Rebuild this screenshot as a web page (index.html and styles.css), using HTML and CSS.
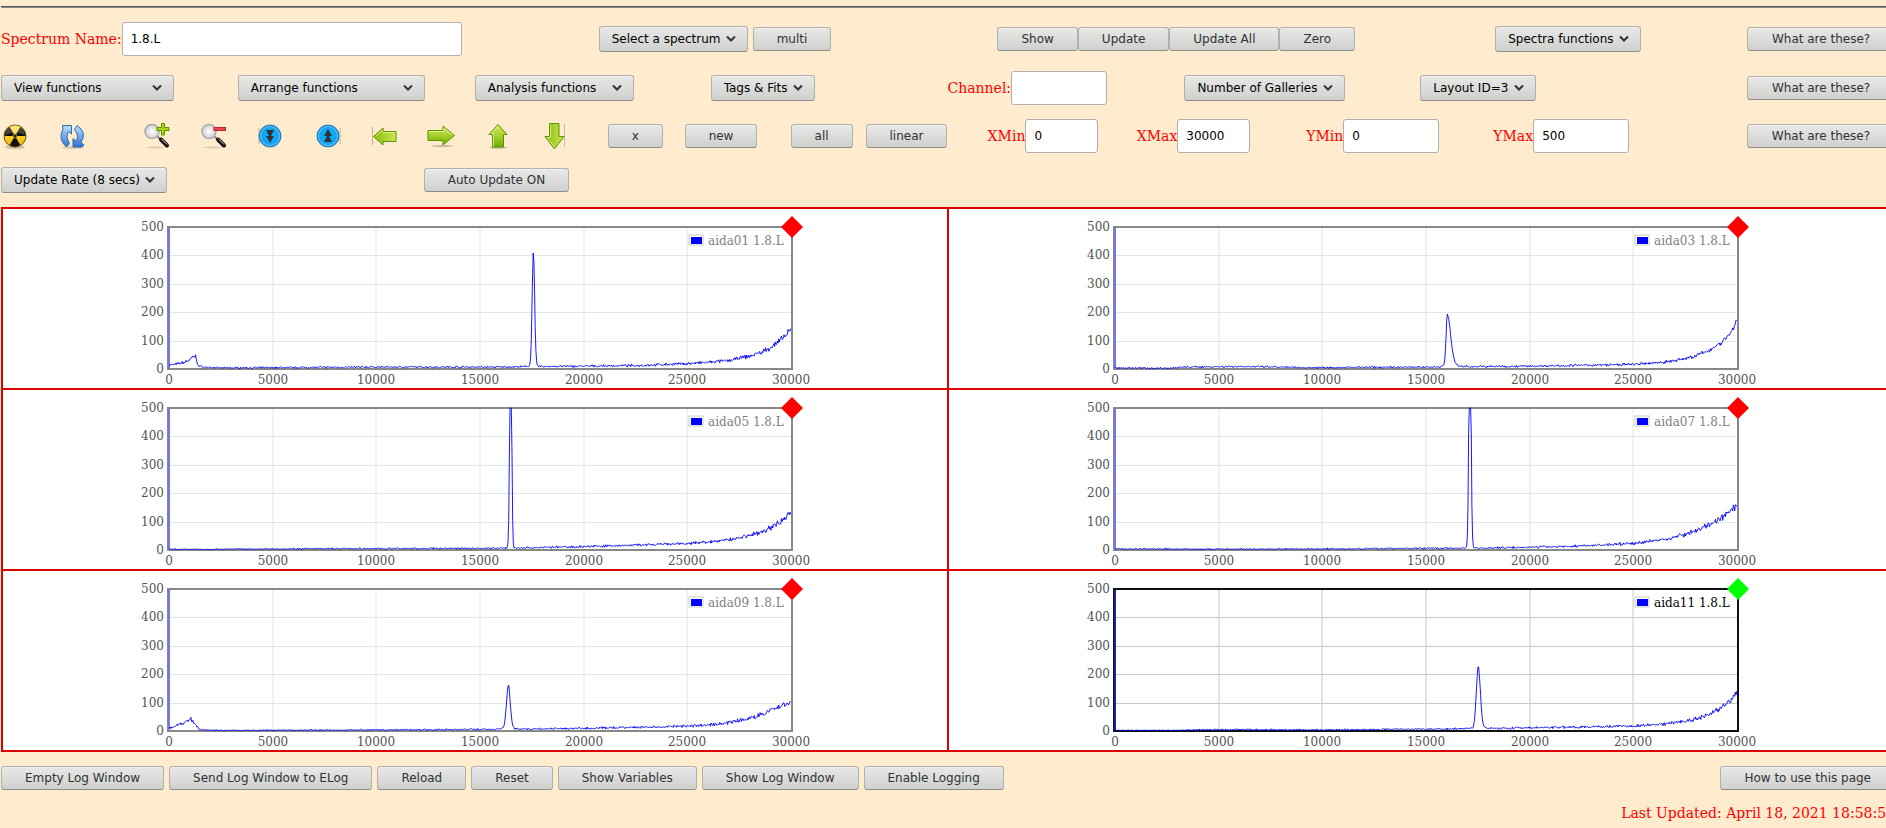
FILE: index.html
```
<!DOCTYPE html>
<html lang="en">
<head>
  <meta charset="UTF-8" />
  <meta name="viewport" content="width=device-width, initial-scale=1.0"/>
  <title>Spectrum Browser</title>
  <link rel="stylesheet" href="styles.css">
</head>
<body>

<div class="page">
  <hr>

  <form class="controls" id="controls">
    <div class="row row-name">
      <div class="field">
        <label for="spectrum">Spectrum Name:</label>
        <input type="text" id="spectrum" class="wide" value="1.8.L" />
      </div>
      <div class="field spaced">
        <select aria-label="Select a spectrum"><option>Select a spectrum</option></select>
        <button type="button">multi</button>
      </div>
      <div class="field">
        <button type="button">Show</button>
        <button type="button">Update</button>
        <button type="button">Update All</button>
        <button type="button">Zero</button>
      </div>
      <div class="field">
        <select aria-label="Spectra functions"><option>Spectra functions</option></select>
      </div>
      <div class="field"><button type="button" class="fill">What are these?</button></div>
    </div>

    <div class="row row-functions">
      <div class="field"><select class="view" aria-label="View functions"><option>View functions</option></select></div>
      <div class="field"><select class="arrange" aria-label="Arrange functions"><option>Arrange functions</option></select></div>
      <div class="field"><select class="analysis" aria-label="Analysis functions"><option>Analysis functions</option></select></div>
      <div class="field"><select aria-label="Tags and fits"><option>Tags &amp; Fits</option></select></div>
      <div class="field">
        <label for="channel">Channel:</label>
        <input type="text" id="channel" class="medium" />
      </div>
      <div class="field"><select aria-label="Number of Galleries"><option>Number of Galleries</option></select></div>
      <div class="field"><select aria-label="Layout"><option>Layout ID=3</option></select></div>
      <div class="field"><button type="button" class="fill">What are these?</button></div>
    </div>

    <div class="row row-tools">
      <button type="button" class="icon" aria-label="Clear">
        <svg viewBox="0 0 28 28">
          <ellipse cx="14" cy="25" rx="10" ry="2" fill="#000" opacity=".18"/>
          <circle cx="14" cy="14" r="11" fill="url(#yellow)" stroke="#6b5200"/>
          <path d="M14 14L3.500 14A10.500 10.500 0 0 1 8.700 4.900ZM14 14L19.300 4.900A10.500 10.500 0 0 1 24.500 14ZM14 14L19.300 23.100A10.500 10.500 0 0 1 8.700 23.100Z" fill="#111"/>
          <path d="M4 13a10 10 0 0 1 20 0q-10-5-20 0z" fill="#fff" opacity=".2"/>
          <circle cx="14" cy="14" r="2" fill="#222" stroke="#e8b800" stroke-width=".6"/>
        </svg>
      </button>
      <button type="button" class="icon" aria-label="Refresh">
        <svg viewBox="0 0 28 28">
          <ellipse cx="15" cy="25.500" rx="11" ry="1.500" fill="#000" opacity=".15"/>
          <path d="M4.500 3.500H13.500V12L10.800 9.500Q7 14 11.500 21.500L8.500 25Q-.5 17 5 7.500Z" fill="url(#blue)" stroke="#2a69b8" stroke-linejoin="round"/>
          <path d="M23.500 25H15V16.500L18 19.200Q21.500 13.500 16.500 7.500L19 3.500Q29.500 10.500 23 20.500L26 23Z" fill="url(#blue)" stroke="#2a69b8" stroke-linejoin="round"/>
        </svg>
      </button>
      <button type="button" class="icon" aria-label="Zoom in">
        <svg viewBox="0 0 28 28">
          <ellipse cx="14" cy="25.500" rx="9" ry="1.200" fill="#000" opacity=".12"/>
          <path d="M14.500 13.500L19 18" stroke="#888" stroke-width="2"/>
          <path d="M19 17.500L25 23.500" stroke="#111" stroke-width="4" stroke-linecap="round"/>
          <path d="M19.500 17L25 22.500" stroke="#ccc"/>
          <circle cx="10" cy="9.500" r="7" fill="url(#glass)" stroke="#aaa" stroke-width="1.500"/>
          <circle cx="10" cy="9.500" r="5.500" fill="none" stroke="#ddd"/>
          <path d="M19.500 1.500h3v4h4.500v3h-4.500v4.500h-3v-4.500h-4.500v-3h4.500z" fill="#a6d80e" stroke="#5c8c00"/>
        </svg>
      </button>
      <button type="button" class="icon" aria-label="Zoom out">
        <svg viewBox="0 0 28 28">
          <ellipse cx="14" cy="25.500" rx="9" ry="1.200" fill="#000" opacity=".12"/>
          <path d="M14.500 13.500L19 18" stroke="#888" stroke-width="2"/>
          <path d="M19 17.500L25 23.500" stroke="#111" stroke-width="4" stroke-linecap="round"/>
          <path d="M19.500 17L25 22.500" stroke="#ccc"/>
          <circle cx="10" cy="9.500" r="7" fill="url(#glass)" stroke="#aaa" stroke-width="1.500"/>
          <circle cx="10" cy="9.500" r="5.500" fill="none" stroke="#ddd"/>
          <rect x="15" y="5.500" width="11.500" height="3" fill="#e8484a" stroke="#c02528"/>
        </svg>
      </button>
      <button type="button" class="icon" aria-label="Scale down">
        <svg viewBox="0 0 28 28">
          <path d="M3 6V22" stroke="#a08870" opacity=".6"/>
          <circle cx="14" cy="14" r="11" fill="url(#disc)" stroke="#2377b5"/>
          <circle cx="14" cy="14" r="9.500" fill="none" stroke="#6bd2ff" opacity=".8"/>
          <path d="M10 8h8l-3 6h3l-4 7-4-7h3z" fill="#333" />
        </svg>
      </button>
      <button type="button" class="icon" aria-label="Scale up">
        <svg viewBox="0 0 28 28">
          <path d="M27 6V22" stroke="#a08870" opacity=".6"/>
          <circle cx="15" cy="14" r="11" fill="url(#disc)" stroke="#2377b5"/>
          <circle cx="15" cy="14" r="9.500" fill="none" stroke="#6bd2ff" opacity=".8"/>
          <path d="M11 20h8l-3-6h3l-4-7-4 7h3z" fill="#333"/>
        </svg>
      </button>
      <button type="button" class="icon" aria-label="Left">
        <svg viewBox="0 0 28 28">
          <path d="M2.500 5V23" stroke="#a08870" opacity=".6"/>
          <path d="M3.500 14.500L13 6V9.500H26V19.500H13V23Z" fill="url(#greenX)" stroke="#5c9400" stroke-linejoin="round"/>
          <path d="M5.500 14.500L12 8.500V10.500H25" fill="none" stroke="#e4f59a" opacity=".8"/>
        </svg>
      </button>
      <button type="button" class="icon" aria-label="Right">
        <svg viewBox="0 0 28 28">
          <ellipse cx="15" cy="24" rx="11" ry="1.200" fill="#000" opacity=".2"/>
          <path d="M27.500 13.500L16 4V8.500H1V18.500H16V23Z" fill="url(#greenY)" stroke="#5c9400" stroke-linejoin="round"/>
          <path d="M2 9.500H17V6.500L25.500 13" fill="none" stroke="#e4f59a" opacity=".8"/>
        </svg>
      </button>
      <button type="button" class="icon" aria-label="Up">
        <svg viewBox="0 0 28 28">
          <ellipse cx="14" cy="25.500" rx="9" ry="1.200" fill="#000" opacity=".25"/>
          <path d="M14 2.500L23 12.500H19.500V25H8.500V12.500H5Z" fill="url(#greenY)" stroke="#5c9400" stroke-linejoin="round"/>
          <path d="M14 4.500L7.500 11.500H9.500V24" fill="none" stroke="#e4f59a" opacity=".8"/>
        </svg>
      </button>
      <button type="button" class="icon" aria-label="Down">
        <svg viewBox="0 0 28 28">
          <path d="M23.500 2V25" stroke="#a08870" opacity=".5"/>
          <path d="M13.500 27L23 14.500H18V1.500H8.500V14.500H4Z" fill="url(#greenX)" stroke="#5c9400" stroke-linejoin="round"/>
          <path d="M13.500 25L6 15.500H9.500V2.500" fill="none" stroke="#e4f59a" opacity=".8"/>
        </svg>
      </button>
      <div class="field"><button type="button">x</button></div>
      <div class="field"><button type="button">new</button></div>
      <div class="field"><button type="button">all</button></div>
      <div class="field"><button type="button">linear</button></div>
      <div class="field end">
        <label for="xmin">XMin</label>
        <input type="text" id="xmin" class="small" value="0" />
      </div>
      <div class="field end">
        <label for="xmax">XMax</label>
        <input type="text" id="xmax" class="small" value="30000" />
      </div>
      <div class="field end">
        <label for="ymin">YMin</label>
        <input type="text" id="ymin" class="medium" value="0" />
      </div>
      <div class="field end">
        <label for="ymax">YMax</label>
        <input type="text" id="ymax" class="medium" value="500" />
      </div>
      <div class="field end"><button type="button" class="fill">What are these?</button></div>
    </div>

    <div class="row row-update">
      <div class="field"><select aria-label="Update Rate"><option>Update Rate (8 secs)</option></select></div>
      <div class="field"><button type="button">Auto Update ON</button></div>
    </div>
  </form>

  <div class="gallery" id="gallery"></div>

  <div class="bottom">
    <button type="button">Empty Log Window</button>
    <button type="button">Send Log Window to ELog</button>
    <button type="button">Reload</button>
    <button type="button">Reset</button>
    <button type="button">Show Variables</button>
    <button type="button">Show Log Window</button>
    <button type="button">Enable Logging</button>
    <button type="button" class="help">How to use this page</button>
  </div>
  <div class="updated">Last Updated: April 18, 2021 18:58:51</div>
</div>

<!-- shared icon gradients -->
<svg class="defs" aria-hidden="true">
  <defs>
    <linearGradient id="yellow" x2="0" y2="1"><stop stop-color="#ffe45c"/><stop offset="1" stop-color="#f2b600"/></linearGradient>
    <linearGradient id="blue" x2="0" y2="1"><stop stop-color="#b8e2ff"/><stop offset="1" stop-color="#3273cc"/></linearGradient>
    <radialGradient id="glass"><stop stop-color="#fff"/><stop offset="1" stop-color="#cfcfd6"/></radialGradient>
    <radialGradient id="disc"><stop stop-color="#00b4ff"/><stop offset="1" stop-color="#1e9cec"/></radialGradient>
    <linearGradient id="greenY" x2="0" y2="1"><stop stop-color="#d8ec5c"/><stop offset="1" stop-color="#6fb000"/></linearGradient>
    <linearGradient id="greenX"><stop stop-color="#84bd06"/><stop offset="1" stop-color="#cfe65a"/></linearGradient>
  </defs>
</svg>

<script>
  // base: [channel, counts] points, peak: position, height, left and right width
  const charts = [
    { name: "aida01 1.8.L", peak: [17575, 390, 60, 60],
      base: [[0, 14], [200, 15], [700, 23], [1000, 32], [1150, 43], [1280, 44], [1420, 10], [1800, 6], [2500, 4], [5000, 5], [10000, 7], [16000, 7], [20000, 10], [22500, 12], [25000, 19], [26000, 23], [27000, 30], [28000, 45], [28500, 57], [29000, 74], [29500, 102], [30000, 136]] },
    { name: "aida03 1.8.L", peak: [16030, 172, 60, 160],
      base: [[0, 4], [2500, 3], [3500, 7], [6000, 9], [9000, 5], [15000, 7], [20000, 10], [25000, 16], [26000, 21], [27000, 29], [27500, 37], [28200, 50], [28800, 72], [29300, 97], [29700, 127], [30000, 172]] },
    { name: "aida05 1.8.L", peak: [16480, 900, 45, 45],
      base: [[0, 3], [1500, 2], [5000, 4], [16000, 6], [20000, 12], [25000, 22], [26500, 31], [27500, 43], [28500, 62], [29200, 85], [29600, 108], [30000, 130]] },
    { name: "aida07 1.8.L", peak: [17120, 900, 50, 50],
      base: [[0, 4], [5000, 3], [10000, 4], [18000, 7], [22000, 13], [25000, 23], [26500, 37], [27500, 55], [28500, 83], [29200, 109], [29600, 131], [30000, 156]] },
    { name: "aida09 1.8.L", peak: [16370, 142, 90, 90],
      base: [[0, 11], [200, 12], [600, 26], [1050, 42], [1300, 20], [1500, 4], [2500, 2], [10000, 4], [16000, 6], [20000, 9], [25000, 17], [26500, 24], [27500, 36], [28500, 55], [29200, 78], [29600, 91], [30000, 105]] },
    { name: "aida11 1.8.L", peak: [17520, 206, 90, 100], active: true,
      base: [[0, 2], [3000, 2], [4500, 5], [10000, 4], [17000, 8], [20000, 11], [25000, 18], [26500, 25], [27500, 35], [28200, 46], [28800, 64], [29300, 86], [29700, 111], [30000, 140]] }
  ];

  const LEFT = 44, RIGHT = 666, TOP = 18, BOTTOM = 160;
  const xPos = (ch) => LEFT + ch * (RIGHT - LEFT) / 30000;
  const yPos = (n) => BOTTOM - n * (BOTTOM - TOP) / 500;

  let seed = 7;
  function random() {
    seed = (seed * 16807) % 2147483647;
    return seed / 2147483647;
  }

  function level(base, ch) {
    for (let i = 1; i < base.length; i++) {
      if (ch <= base[i][0]) {
        const [x0, y0] = base[i - 1];
        const [x1, y1] = base[i];
        return y0 + (y1 - y0) * (ch - x0) / (x1 - x0);
      }
    }
    return base[base.length - 1][1];
  }

  function trace(chart) {
    const [pos, height, left, right] = chart.peak;
    const points = [];
    for (let ch = 0; ch <= 30000; ch += 32) {
      const width = ch < pos ? left : right;
      const d = (ch - pos) / width;
      const shape = height * Math.exp(-d * d / 2) + 14 * Math.exp(-Math.abs(d) / 2);
      const mean = level(chart.base, ch);
      const noise = (random() + random() - 1) * (1 + Math.sqrt(mean) * 1.2);
      const n = Math.max(1, Math.min(500, mean + noise + shape));
      points.push(xPos(ch).toFixed(1) + "," + yPos(n).toFixed(1));
    }
    return points.join(" ");
  }

  function draw(chart) {
    let grid = "", labels = "";
    for (let ch = 0; ch <= 30000; ch += 5000) {
      const x = Math.round(xPos(ch));
      if (ch > 0 && ch < 30000) grid += `<path class="grid" d="M${x} ${TOP}V${BOTTOM}"/>`;
      labels += `<text class="tick" x="${x}" y="175" text-anchor="middle">${ch}</text>`;
    }
    for (let n = 0; n <= 500; n += 100) {
      const y = Math.round(yPos(n));
      if (n > 0 && n < 500) grid += `<path class="grid" d="M${LEFT} ${y}.5H${RIGHT}"/>`;
      labels += `<text class="tick" x="39" y="${y + 4}" text-anchor="end">${n}</text>`;
    }
    return `<div class="cell${chart.active ? " active" : ""}">
      <svg width="700" height="179" role="img" aria-label="${chart.name}">
        ${grid}
        <rect class="frame" x="43" y="18" width="624" height="142"/>
        <path class="edge" d="M44 19V159"/>
        <polyline class="trace" points="${trace(chart)}"/>
        ${labels}
        <rect class="key" x="564" y="26" width="14" height="10"/>
        <rect class="swatch" x="566" y="28" width="11" height="7"/>
        <text class="legend" x="583" y="36">${chart.name}</text>
        <path class="marker" d="M667 7L678 18L667 29L656 18Z"/>
      </svg>
    </div>`;
  }

  document.getElementById("gallery").innerHTML = charts.map(draw).join("");

  document.getElementById("controls").addEventListener("submit", function(e) {
    e.preventDefault();
  });
</script>

</body>
</html>
```
FILE: styles.css
```
body {
  margin: 0;
  background: #ffebcd;
  font-family: "DejaVu Serif", serif;
  font-size: 14px;
  color: red;
  overflow: hidden;
}

/* the page runs slightly past the right edge of the window */
.page {
  box-sizing: border-box;
  width: calc(100% + 9px);
  padding: 6px 0 0 1px;
}

hr {
  height: 0;
  margin: 0 0 14px;
  border: 0;
  border-top: 1px solid #555;
  border-bottom: 1px solid #888;
}

.controls {
  display: flex;
  flex-direction: column;
  gap: 14px;
}

.row {
  display: grid;
  align-items: center;
  min-height: 34px;
}

.row-name {
  grid-template-columns: 598fr 399fr 498fr 252fr 148fr;
  padding-bottom: 1px;
}

.row-functions {
  grid-template-columns: 237fr 237fr 236fr 237fr 237fr 236fr 327fr 148fr;
}

.row-tools {
  grid-template-columns: 57fr 84fr 57fr 57fr 57fr 57fr 57fr 57fr 57fr 67fr 77fr 106fr 75fr 82fr 151fr 152fr 189fr 190fr 266fr;
}

.row-update {
  grid-template-columns: 423fr 1472fr;
  min-height: 26px;
}

.field {
  display: flex;
  align-items: center;
  white-space: nowrap;
  min-width: 0;
}

.spaced {
  gap: 5px;
}

.end {
  justify-content: flex-end;
}

input, select, button {
  box-sizing: border-box;
  margin: 0;
  border: 1px solid #b0b0ac;
  border-radius: 3px;
  font-family: "DejaVu Sans", sans-serif;
  font-size: 12px;
}

input {
  height: 34px;
  padding: 0 8px;
  background: white;
  color: black;
}

.wide {
  width: 340px;
}

.medium {
  width: 96px;
}

.small {
  width: 73px;
}

select, button {
  border-bottom-color: #8c8c88;
  background: linear-gradient(#e8e8e6, #d0d0ce);
  box-shadow: inset 0 1px 0 #f0f0ee;
  cursor: pointer;
}

select {
  appearance: none;
  height: 26px;
  padding: 0 26px 0 12px;
  color: black;
  background: url("data:image/svg+xml,%3Csvg xmlns='http://www.w3.org/2000/svg' width='10' height='8'%3E%3Cpath d='M1 1.500L5 5.500L9 1.500' fill='none' stroke='%23333' stroke-width='2'/%3E%3C/svg%3E") no-repeat right 11px center, linear-gradient(#e8e8e6, #d0d0ce);
}

.view {
  width: 173px;
}

.arrange {
  width: 187px;
}

.analysis {
  width: 159px;
}

button {
  height: 24px;
  padding: 0 23px;
  color: #2e3436;
  white-space: nowrap;
}

.fill {
  width: 148px;
}

.icon {
  width: 28px;
  height: 28px;
  padding: 0;
  border: 0;
  background: none;
  box-shadow: none;
}

.icon svg {
  display: block;
  width: 28px;
  height: 28px;
}

.defs {
  position: absolute;
  width: 0;
  height: 0;
}

.gallery {
  display: grid;
  grid-template-columns: 1fr 1fr;
  gap: 2px;
  margin-top: 14px;
  border: 2px solid #dc0000;
  background: #dc0000;
}

.cell {
  display: flex;
  justify-content: center;
  background: white;
}

.grid {
  stroke: #e4e4e4;
}

.frame {
  fill: none;
  stroke: #888;
  stroke-width: 2;
}

.edge {
  stroke: #7676e8;
  stroke-width: 2;
}

.trace {
  fill: none;
  stroke: blue;
  stroke-opacity: 0.9;
}

.tick {
  fill: #545454;
  font-size: 12px;
}

.legend {
  fill: #808080;
  font-size: 12px;
}

.key {
  fill: white;
  stroke: #ccc;
}

.swatch {
  fill: blue;
}

.marker {
  fill: red;
}

.active .grid {
  stroke: #c8c8c8;
}

.active .frame {
  stroke: #111;
}

.active .edge {
  stroke: #2020a0;
}

.active .legend {
  fill: black;
}

.active .marker {
  fill: lime;
}

.bottom {
  display: flex;
  gap: 5px;
  margin-top: 14px;
}

.help {
  margin-left: auto;
}

.updated {
  margin-top: 14px;
  line-height: 18px;
  text-align: right;
}
```
